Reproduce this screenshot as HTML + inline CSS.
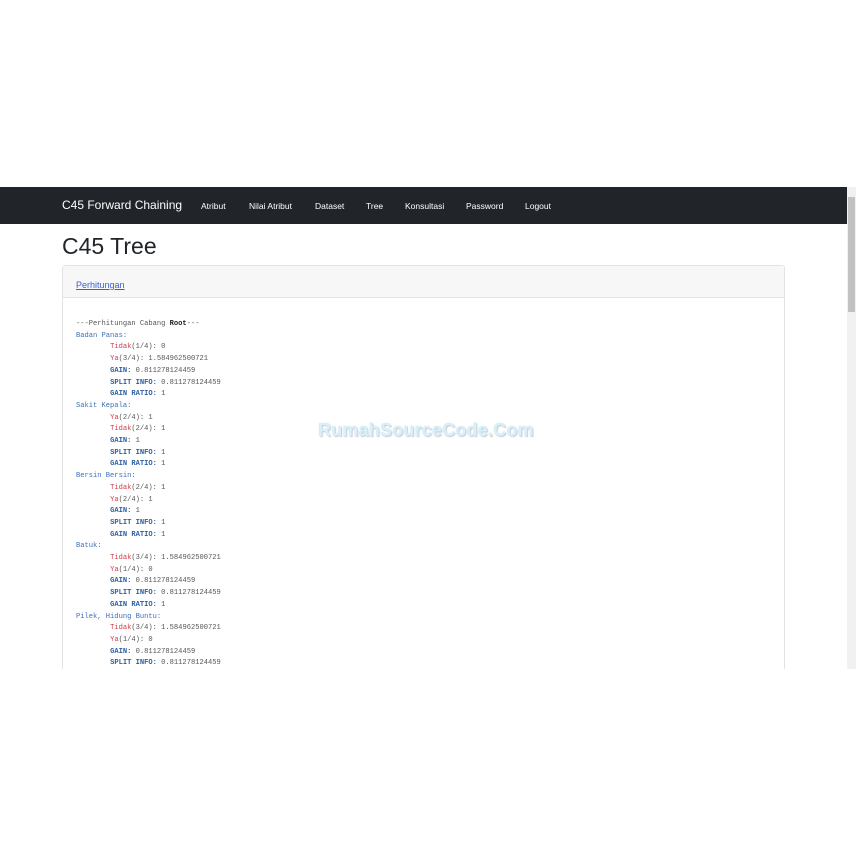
<!DOCTYPE html>
<html><head><meta charset="utf-8"><style>
*{margin:0;padding:0;box-sizing:border-box}
body{width:856px;height:856px;background:#fff;position:relative;overflow:hidden;font-family:"Liberation Sans",sans-serif}
#vp{position:absolute;left:0;top:187px;width:856px;height:482px;overflow:hidden;background:#fff}
#nav{position:absolute;left:0;top:0;width:847px;height:37px;background:#212529}
#nav .brand{position:absolute;left:62px;top:11px;color:#fff;font-size:12px}
#nav a{position:absolute;top:14px;color:#fff;font-size:8.5px;text-decoration:none}
#sb{position:absolute;left:847px;top:0;width:9px;height:482px;background:#f1f1f1}
#thumb{position:absolute;left:848px;top:10px;width:7px;height:115px;background:#c1c1c1}
h1{position:absolute;left:62px;top:46px;font-size:23px;font-weight:400;color:#212529}
#card{position:absolute;left:62px;top:78px;width:723px;height:500px;border:1px solid #e3e3e3;border-radius:3px}
#ch{height:32px;background:#f7f7f7;border-bottom:1px solid #e3e3e3;padding:9px 0 0 13px}
#ch a{color:#3a5fd0;font-size:9px;text-decoration:underline}
pre{position:absolute;left:13px;top:53px;font-family:"Liberation Mono",monospace;font-size:7.1px;line-height:11.7px;color:#555}
.b{color:#3b6fb6}.r{color:#d03a4a}.k{color:#2b5f9e;font-weight:bold}.d{color:#222;font-weight:bold}
#wm{position:absolute;left:318px;top:233px;font-size:18px;font-weight:bold;color:#d6f1fb;letter-spacing:0.2px;text-shadow:0 0 1px #bcd,1px 1px 1px #ccc}
</style></head><body>
<div id="vp">
<div id="nav"><span class="brand">C45 Forward Chaining</span>
<a style="left:201px">Atribut</a><a style="left:249px">Nilai Atribut</a><a style="left:315px">Dataset</a><a style="left:366px">Tree</a><a style="left:405px">Konsultasi</a><a style="left:466px">Password</a><a style="left:525px">Logout</a></div>
<h1>C45 Tree</h1>
<div id="card"><div id="ch"><a>Perhitungan</a></div>
<pre>---Perhitungan Cabang <span class="d">Root</span>---
<span class="b">Badan Panas:</span>
        <span class="r">Tidak</span>(1/4): 0
        <span class="r">Ya</span>(3/4): 1.584962500721
        <span class="k">GAIN:</span> 0.811278124459
        <span class="k">SPLIT INFO:</span> 0.811278124459
        <span class="k">GAIN RATIO:</span> 1
<span class="b">Sakit Kepala:</span>
        <span class="r">Ya</span>(2/4): 1
        <span class="r">Tidak</span>(2/4): 1
        <span class="k">GAIN:</span> 1
        <span class="k">SPLIT INFO:</span> 1
        <span class="k">GAIN RATIO:</span> 1
<span class="b">Bersin Bersin:</span>
        <span class="r">Tidak</span>(2/4): 1
        <span class="r">Ya</span>(2/4): 1
        <span class="k">GAIN:</span> 1
        <span class="k">SPLIT INFO:</span> 1
        <span class="k">GAIN RATIO:</span> 1
<span class="b">Batuk:</span>
        <span class="r">Tidak</span>(3/4): 1.584962500721
        <span class="r">Ya</span>(1/4): 0
        <span class="k">GAIN:</span> 0.811278124459
        <span class="k">SPLIT INFO:</span> 0.811278124459
        <span class="k">GAIN RATIO:</span> 1
<span class="b">Pilek, Hidung Buntu:</span>
        <span class="r">Tidak</span>(3/4): 1.584962500721
        <span class="r">Ya</span>(1/4): 0
        <span class="k">GAIN:</span> 0.811278124459
        <span class="k">SPLIT INFO:</span> 0.811278124459
        <span class="k">GAIN RATIO:</span> 1</pre>
</div>
<div id="wm">RumahSourceCode.Com</div>
<div id="sb"></div><div id="thumb"></div>
</div>
</body></html>
